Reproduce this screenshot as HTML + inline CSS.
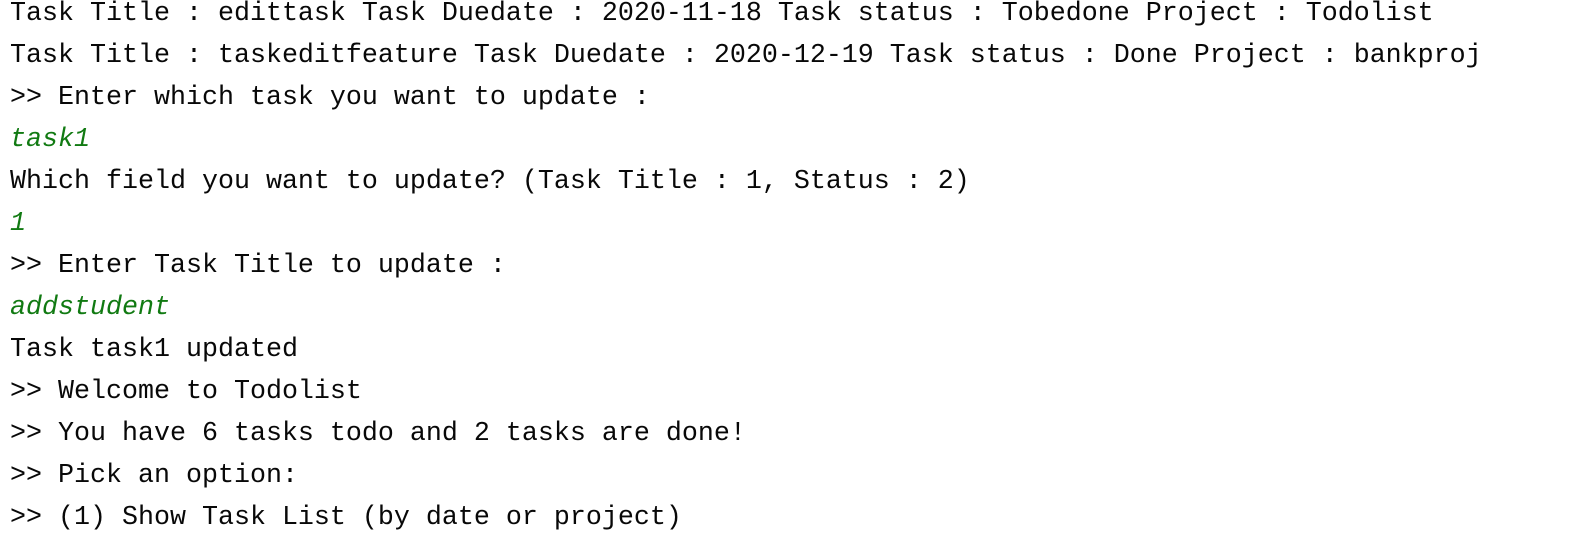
<!DOCTYPE html>
<html><head><meta charset="utf-8"><style>
html,body{margin:0;padding:0;background:#fff;width:1570px;height:528px;overflow:hidden}
pre{margin:0;position:absolute;left:10px;top:-7px;font-family:"Liberation Mono",monospace;font-size:26.67px;line-height:42px;color:#080808}
.g{color:#117a12;font-style:italic}
</style></head><body><pre>Task Title : edittask Task Duedate : 2020-11-18 Task status : Tobedone Project : Todolist
Task Title : taskeditfeature Task Duedate : 2020-12-19 Task status : Done Project : bankproj
&gt;&gt; Enter which task you want to update :
<span class="g">task1</span>
Which field you want to update? (Task Title : 1, Status : 2)
<span class="g">1</span>
&gt;&gt; Enter Task Title to update :
<span class="g">addstudent</span>
Task task1 updated
&gt;&gt; Welcome to Todolist
&gt;&gt; You have 6 tasks todo and 2 tasks are done!
&gt;&gt; Pick an option:
&gt;&gt; (1) Show Task List (by date or project)</pre></body></html>
